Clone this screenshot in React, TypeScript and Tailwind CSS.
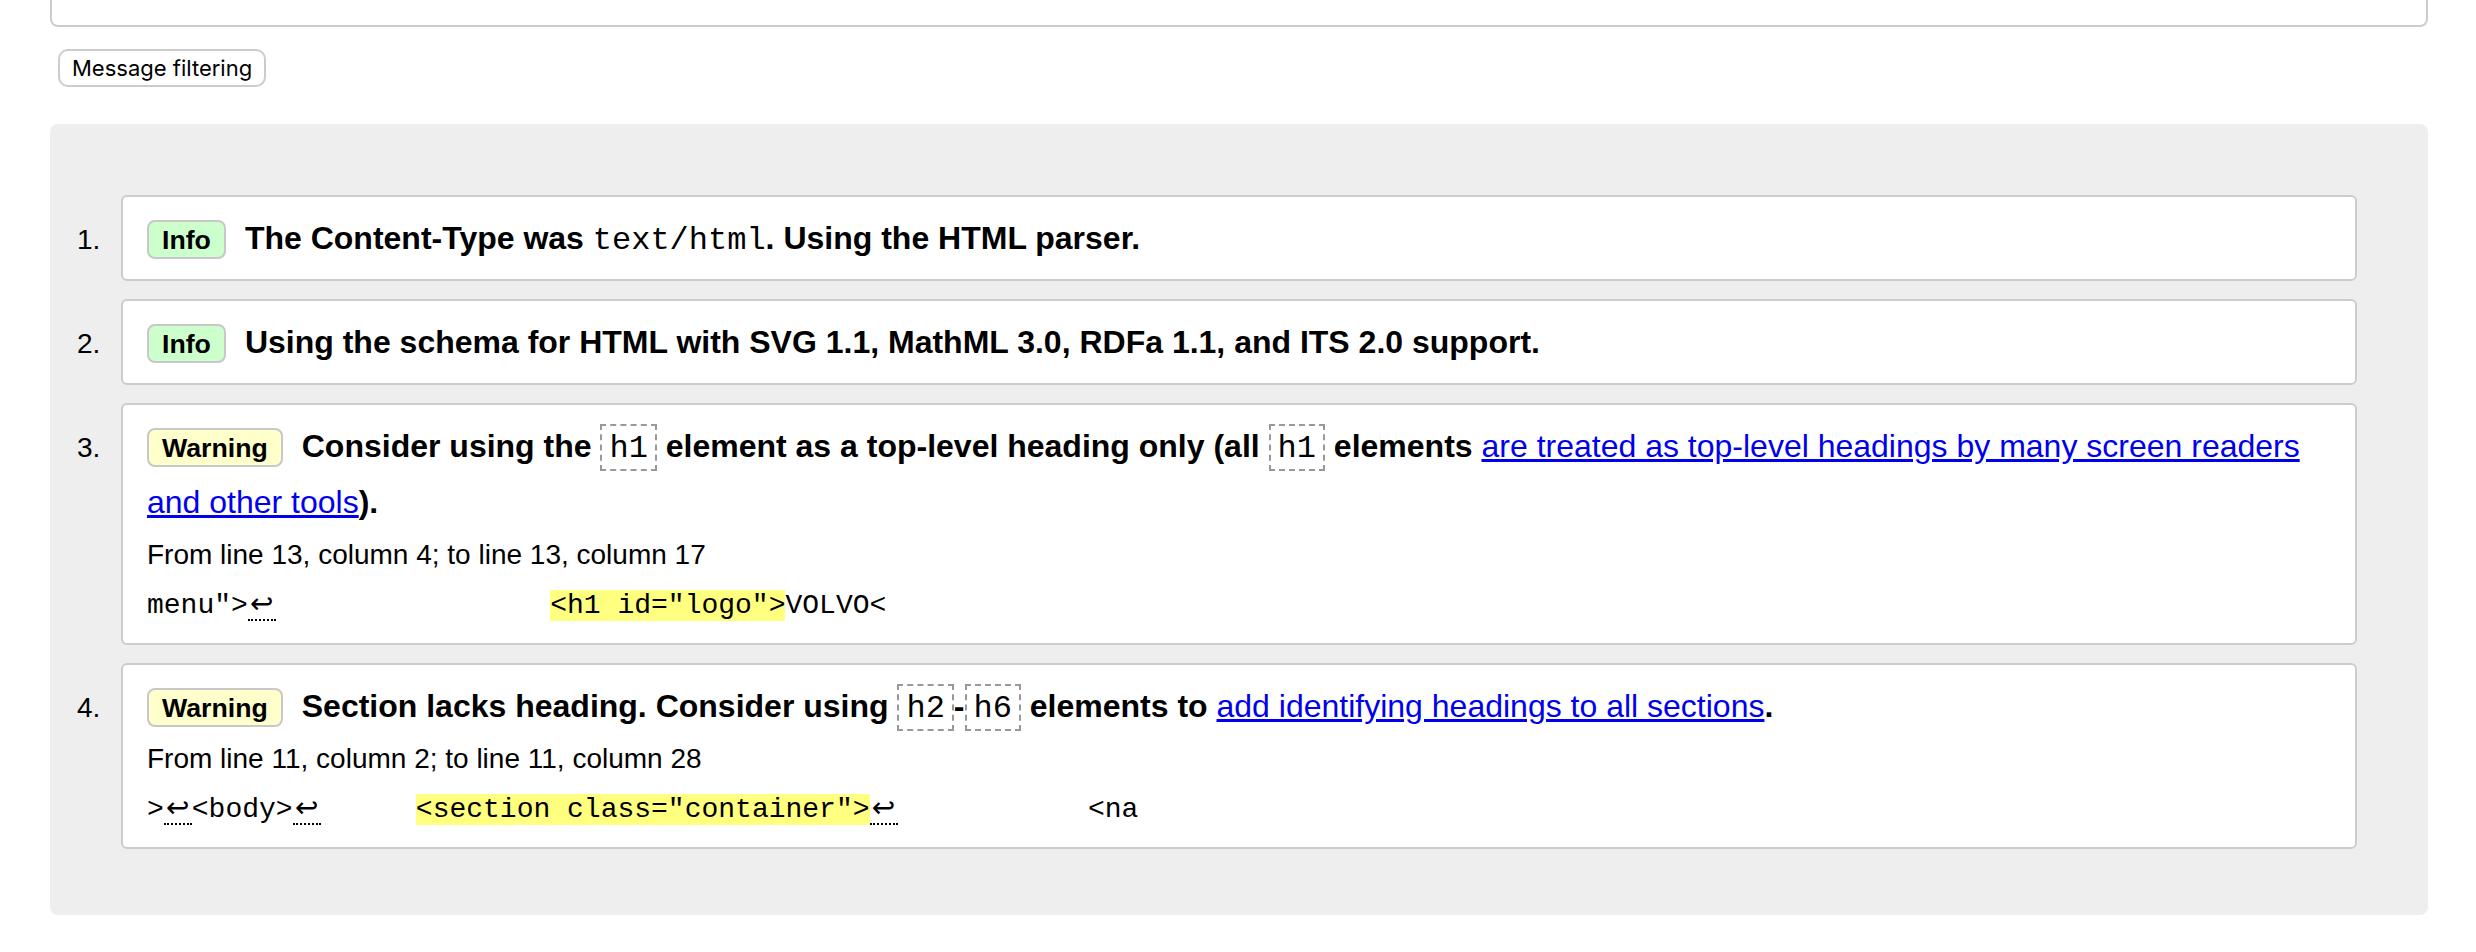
import type { ReactNode } from "react";

type Kind = "Info" | "Warning";

function Badge({ kind }: { kind: Kind }) {
  return (
    <span
      className={`mr-[19px] inline-block rounded-[8px] border-2 border-[#c8c8c8] px-[13px] pt-[3px] pb-[2px] align-baseline text-[26.7px] font-bold leading-[30px] ${
        kind === "Info" ? "bg-[#ccffcc]" : "bg-[#ffffcc]"
      }`}
    >
      {kind}
    </span>
  );
}

// element names inside a message title get a dashed box
function Tag({ children }: { children: ReactNode }) {
  return (
    <code className="border-2 border-dashed border-[#999] px-[7px] pt-[4px] pb-[2px] font-['Liberation_Mono',monospace] text-[32px] leading-none font-normal">
      {children}
    </code>
  );
}

function Lf() {
  return (
    <span className="inline-block w-[28px] border-b-2 border-dotted border-black pb-[3px] text-center font-['DejaVu_Sans',sans-serif] text-[28px] leading-[24px]">
      ↩
    </span>
  );
}

// tab run in the source extract, as wide as it is drawn
function Tab({ w }: { w: string }) {
  return <span className={`inline-block ${w}`}>{"\t"}</span>;
}

function Mark({ children }: { children: ReactNode }) {
  return <mark className="bg-[#ffff80] text-black">{children}</mark>;
}

function Link({ children }: { children: ReactNode }) {
  return (
    <a href="#" className="font-normal text-[#0000ee] underline">
      {children}
    </a>
  );
}

function Message({
  n,
  kind,
  title,
  location,
  extract,
}: {
  n: number;
  kind: Kind;
  title: ReactNode;
  location?: string;
  extract?: ReactNode;
}) {
  return (
    <li className="flex items-baseline">
      <span className="w-[44px] shrink-0 text-[28px]">{n}.</span>
      <div className="flex-1 rounded-[6px] border-2 border-[#ccc] bg-white px-[24px] py-[13px]">
        <p className="text-[32px] font-bold leading-[56px]">
          <Badge kind={kind} />
          {title}
        </p>
        {location && <p className="text-[28px] leading-[49px]">{location}</p>}
        {extract && (
          <p className="whitespace-pre text-[28px] leading-[49px]">
            <code className="font-['Liberation_Mono',monospace] text-[28px]">{extract}</code>
          </p>
        )}
      </div>
    </li>
  );
}

export default function App() {
  return (
    <div className="min-h-[952px] bg-white font-['Liberation_Sans',Arial,sans-serif] text-black">
      <div className="ml-[50px] mr-[48px]">
        <div className="h-[27px] rounded-b-[8px] border-2 border-t-0 border-[#ccc] bg-white" />
        <button className="mt-[22px] ml-[8px] block h-[38px] rounded-[10px] border-2 border-[#ccc] bg-white px-[12px] font-['Inter',sans-serif] text-[22px] text-black">
          Message filtering
        </button>
        <div className="mt-[37px] rounded-[8px] bg-[#eee] pt-[71px] pb-[66px] pl-[27px] pr-[71px]">
          <ol className="flex flex-col gap-[18px]">
            <Message
              n={1}
              kind="Info"
              title={
                <>
                  The Content-Type was{" "}
                  <code className="font-['Liberation_Mono',monospace] text-[32px] leading-none font-normal">
                    text/html
                  </code>
                  . Using the HTML parser.
                </>
              }
            />
            <Message
              n={2}
              kind="Info"
              title="Using the schema for HTML with SVG 1.1, MathML 3.0, RDFa 1.1, and ITS 2.0 support."
            />
            <Message
              n={3}
              kind="Warning"
              title={
                <>
                  Consider using the <Tag>h1</Tag> element as a top-level heading only (all <Tag>h1</Tag> elements{" "}
                  <Link>are treated as top-level headings by many screen readers and other tools</Link>).
                </>
              }
              location="From line 13, column 4; to line 13, column 17"
              extract={
                <>
                  {'menu">'}
                  <Lf />
                  <Tab w="w-[274.4px]" />
                  <Mark>{'<h1 id="logo">'}</Mark>
                  {"VOLVO<"}
                </>
              }
            />
            <Message
              n={4}
              kind="Warning"
              title={
                <>
                  Section lacks heading. Consider using <Tag>h2</Tag>-<Tag>h6</Tag> elements to{" "}
                  <Link>add identifying headings to all sections</Link>.
                </>
              }
              location="From line 11, column 2; to line 11, column 28"
              extract={
                <>
                  {">"}
                  <Lf />
                  {"<body>"}
                  <Lf />
                  <Tab w="w-[95.2px]" />
                  <Mark>{'<section class="container">'}</Mark>
                  <Lf />
                  <Tab w="w-[190.4px]" />
                  {"<na"}
                </>
              }
            />
          </ol>
        </div>
      </div>
    </div>
  );
}
